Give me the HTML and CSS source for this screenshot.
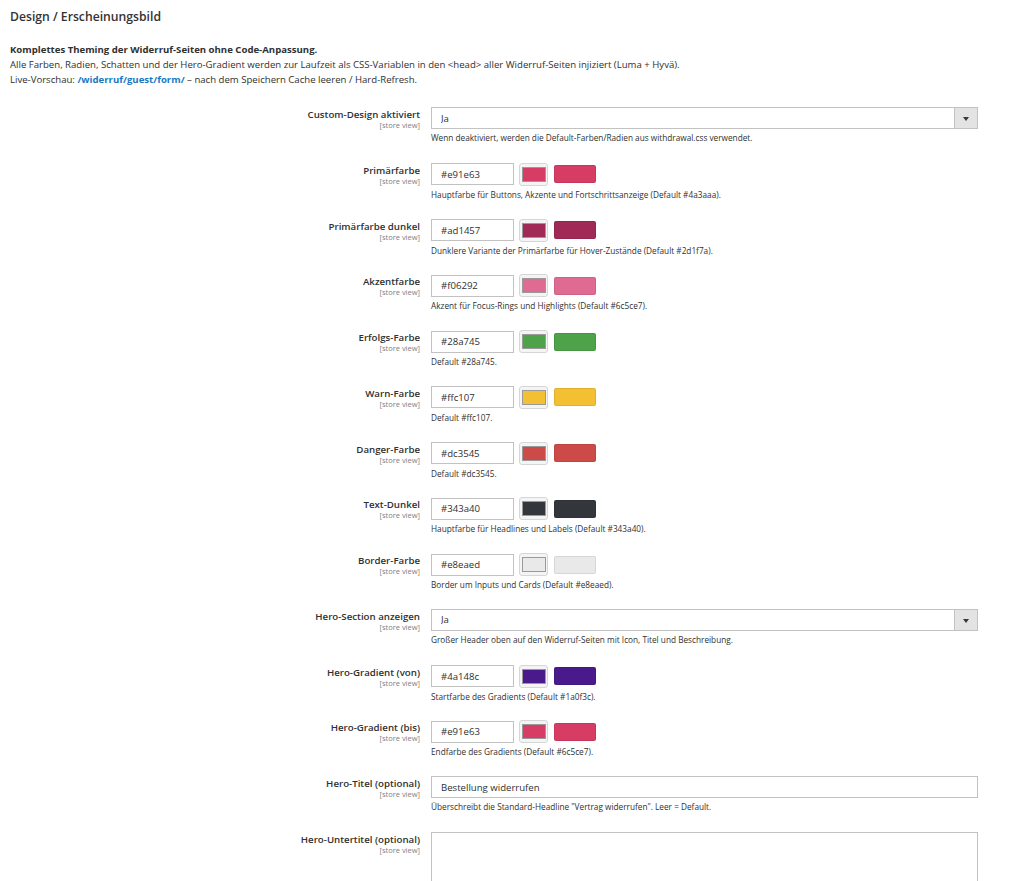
FILE: index.html
```html
<!DOCTYPE html>
<html lang="de">

<head>
    <meta charset="UTF-8">
    <meta name="viewport" content="width=device-width, initial-scale=1.0">
    <title>Design / Erscheinungsbild</title>
    <link rel="stylesheet" href="styles.css">
</head>

<body>
    <div class="section-wrap">
        <h2 class="section-title">Design / Erscheinungsbild</h2>

        <div class="section-comment">
            <strong>Komplettes Theming der Widerruf-Seiten ohne Code-Anpassung.</strong><br>
            Alle Farben, Radien, Schatten und der Hero-Gradient werden zur Laufzeit als CSS-Variablen in den &lt;head&gt; aller Widerruf-Seiten injiziert (Luma + Hyvä).<br>
            Live-Vorschau: <a class="comment-link" href="#">/widerruf/guest/form/</a> – nach dem Speichern Cache leeren / Hard-Refresh.
        </div>

        <section class="form-list">
            <div class="field">
                <label class="field-label">
                    <span class="label-text">Custom-Design aktiviert</span>
                    <span class="scope">[store view]</span>
                </label>
                <div class="field-control">
                    <div class="select-wrap">
                        <select class="select">
                            <option>Ja</option>
                            <option>Nein</option>
                        </select>
                        <span class="select-arrow"></span>
                    </div>
                    <p class="note">Wenn deaktiviert, werden die Default-Farben/Radien aus withdrawal.css verwendet.</p>
                </div>
            </div>

            <div class="field">
                <label class="field-label">
                    <span class="label-text">Primärfarbe</span>
                    <span class="scope">[store view]</span>
                </label>
                <div class="field-control">
                    <div class="color-row">
                        <input type="text" class="input-text color-input" value="#e91e63">
                        <span class="swatch-btn"><span class="swatch" style="--c: #d73c64;"></span></span>
                        <span class="preview" style="--c: #d73c64;"></span>
                    </div>
                    <p class="note">Hauptfarbe für Buttons, Akzente und Fortschrittsanzeige (Default #4a3aaa).</p>
                </div>
            </div>

            <div class="field">
                <label class="field-label">
                    <span class="label-text">Primärfarbe dunkel</span>
                    <span class="scope">[store view]</span>
                </label>
                <div class="field-control">
                    <div class="color-row">
                        <input type="text" class="input-text color-input" value="#ad1457">
                        <span class="swatch-btn"><span class="swatch" style="--c: #a02a55;"></span></span>
                        <span class="preview" style="--c: #a02a55;"></span>
                    </div>
                    <p class="note">Dunklere Variante der Primärfarbe für Hover-Zustände (Default #2d1f7a).</p>
                </div>
            </div>

            <div class="field">
                <label class="field-label">
                    <span class="label-text">Akzentfarbe</span>
                    <span class="scope">[store view]</span>
                </label>
                <div class="field-control">
                    <div class="color-row">
                        <input type="text" class="input-text color-input" value="#f06292">
                        <span class="swatch-btn"><span class="swatch" style="--c: #e06b92;"></span></span>
                        <span class="preview" style="--c: #e06b92;"></span>
                    </div>
                    <p class="note">Akzent für Focus-Rings und Highlights (Default #6c5ce7).</p>
                </div>
            </div>

            <div class="field">
                <label class="field-label">
                    <span class="label-text">Erfolgs-Farbe</span>
                    <span class="scope">[store view]</span>
                </label>
                <div class="field-control">
                    <div class="color-row">
                        <input type="text" class="input-text color-input" value="#28a745">
                        <span class="swatch-btn"><span class="swatch" style="--c: #4ea24a;"></span></span>
                        <span class="preview" style="--c: #4ea24a;"></span>
                    </div>
                    <p class="note">Default #28a745.</p>
                </div>
            </div>

            <div class="field">
                <label class="field-label">
                    <span class="label-text">Warn-Farbe</span>
                    <span class="scope">[store view]</span>
                </label>
                <div class="field-control">
                    <div class="color-row">
                        <input type="text" class="input-text color-input" value="#ffc107">
                        <span class="swatch-btn"><span class="swatch" style="--c: #f3c033;"></span></span>
                        <span class="preview" style="--c: #f3c033;"></span>
                    </div>
                    <p class="note">Default #ffc107.</p>
                </div>
            </div>

            <div class="field">
                <label class="field-label">
                    <span class="label-text">Danger-Farbe</span>
                    <span class="scope">[store view]</span>
                </label>
                <div class="field-control">
                    <div class="color-row">
                        <input type="text" class="input-text color-input" value="#dc3545">
                        <span class="swatch-btn"><span class="swatch" style="--c: #cc4a47;"></span></span>
                        <span class="preview" style="--c: #cc4a47;"></span>
                    </div>
                    <p class="note">Default #dc3545.</p>
                </div>
            </div>

            <div class="field">
                <label class="field-label">
                    <span class="label-text">Text-Dunkel</span>
                    <span class="scope">[store view]</span>
                </label>
                <div class="field-control">
                    <div class="color-row">
                        <input type="text" class="input-text color-input" value="#343a40">
                        <span class="swatch-btn"><span class="swatch" style="--c: #33373c;"></span></span>
                        <span class="preview" style="--c: #33373c;"></span>
                    </div>
                    <p class="note">Hauptfarbe für Headlines und Labels (Default #343a40).</p>
                </div>
            </div>

            <div class="field">
                <label class="field-label">
                    <span class="label-text">Border-Farbe</span>
                    <span class="scope">[store view]</span>
                </label>
                <div class="field-control">
                    <div class="color-row">
                        <input type="text" class="input-text color-input" value="#e8eaed">
                        <span class="swatch-btn"><span class="swatch" style="--c: #e9e9e9;"></span></span>
                        <span class="preview" style="--c: #e9e9e9;"></span>
                    </div>
                    <p class="note">Border um Inputs und Cards (Default #e8eaed).</p>
                </div>
            </div>

            <div class="field">
                <label class="field-label">
                    <span class="label-text">Hero-Section anzeigen</span>
                    <span class="scope">[store view]</span>
                </label>
                <div class="field-control">
                    <div class="select-wrap">
                        <select class="select">
                            <option>Ja</option>
                            <option>Nein</option>
                        </select>
                        <span class="select-arrow"></span>
                    </div>
                    <p class="note">Großer Header oben auf den Widerruf-Seiten mit Icon, Titel und Beschreibung.</p>
                </div>
            </div>

            <div class="field">
                <label class="field-label">
                    <span class="label-text">Hero-Gradient (von)</span>
                    <span class="scope">[store view]</span>
                </label>
                <div class="field-control">
                    <div class="color-row">
                        <input type="text" class="input-text color-input" value="#4a148c">
                        <span class="swatch-btn"><span class="swatch" style="--c: #4a1a8c;"></span></span>
                        <span class="preview" style="--c: #4a1a8c;"></span>
                    </div>
                    <p class="note">Startfarbe des Gradients (Default #1a0f3c).</p>
                </div>
            </div>

            <div class="field">
                <label class="field-label">
                    <span class="label-text">Hero-Gradient (bis)</span>
                    <span class="scope">[store view]</span>
                </label>
                <div class="field-control">
                    <div class="color-row">
                        <input type="text" class="input-text color-input" value="#e91e63">
                        <span class="swatch-btn"><span class="swatch" style="--c: #d73c64;"></span></span>
                        <span class="preview" style="--c: #d73c64;"></span>
                    </div>
                    <p class="note">Endfarbe des Gradients (Default #6c5ce7).</p>
                </div>
            </div>

            <div class="field">
                <label class="field-label">
                    <span class="label-text">Hero-Titel (optional)</span>
                    <span class="scope">[store view]</span>
                </label>
                <div class="field-control">
                    <input type="text" class="input-text" value="Bestellung widerrufen">
                    <p class="note">Überschreibt die Standard-Headline "Vertrag widerrufen". Leer = Default.</p>
                </div>
            </div>

            <div class="field">
                <label class="field-label">
                    <span class="label-text">Hero-Untertitel (optional)</span>
                    <span class="scope">[store view]</span>
                </label>
                <div class="field-control">
                    <textarea class="textarea"></textarea>
                </div>
            </div>
        </section>
    </div>
</body>

</html>
```

FILE: styles.css
```css
html,
body {
    margin: 0;
    padding: 0;
    background: #fff;
}

body {
    font-family: "Open Sans", "Noto Sans", sans-serif;
    color: #303030;
}

.section-wrap {
    padding: 7px 10px 0;
}

.section-title {
    margin: 0;

    font-size: 12.2px;
    font-weight: 600;
    line-height: 20px;
    color: #333;
}

.section-comment {
    margin-top: 15px;

    font-size: 9.6px;
    line-height: 15px;
    color: #303030;
}

.section-comment strong {
    font-weight: 700;
}

.comment-link {
    color: #1979c3;
    font-weight: 700;
    text-decoration: none;
}

.form-list {
    margin-top: 20px;
}

.field {
    display: grid;
    grid-template-columns: 410px 547px;
    column-gap: 11px;

    height: 55.77px;
}

.field-label {
    display: flex;
    flex-direction: column;
    align-items: flex-end;

    padding-top: 2px;
    text-align: right;
}

.label-text {
    font-size: 9.7px;
    font-weight: 600;
    line-height: 12px;
    color: #303030;
}

.scope {
    font-size: 7.5px;
    line-height: 9px;
    color: #808080;
}

.field-control {
    display: flex;
    flex-direction: column;
}

.input-text,
.select-wrap,
.textarea {
    box-sizing: border-box;
    width: 100%;
    height: 22px;

    border: 1px solid #c2c2c2;
    background: #fff;

    font-family: inherit;
    font-size: 9.6px;
    color: #303030;
}

.input-text {
    padding: 0 9px;
    margin: 0;
}

.color-row {
    display: flex;
    align-items: center;
}

.color-input {
    width: 83px;
}

.swatch-btn {
    box-sizing: border-box;
    display: flex;
    align-items: center;
    justify-content: center;

    width: 29px;
    height: 23px;
    margin-left: 5px;

    border: 1px solid #d6d6d6;
    border-radius: 3px;
    background: #f4f4f4;
}

.swatch {
    box-sizing: border-box;
    width: 24px;
    height: 15px;

    border: 1px solid #9a9a9a;
    background: var(--c);
}

.preview {
    box-sizing: border-box;
    width: 42px;
    height: 18px;
    margin-left: 6px;

    border: 1px solid rgba(0, 0, 0, 0.08);
    border-radius: 2px;
    background: var(--c);
}

.select-wrap {
    display: flex;
}

.select {
    flex: 1;
    appearance: none;
    -webkit-appearance: none;

    padding: 0 9px;
    border: 0;
    background: transparent;
    outline: none;

    font-family: inherit;
    font-size: 9.6px;
    color: #303030;
}

.select-arrow {
    position: relative;
    width: 22px;

    border-left: 1px solid #c2c2c2;
    background: #e3e3e3;
}

.select-arrow::after {
    content: "";
    position: absolute;
    left: 8px;
    top: 9px;

    border-left: 3px solid transparent;
    border-right: 3px solid transparent;
    border-top: 4px solid #41362f;
}

.note {
    margin: 3px 0 0;

    font-size: 8.25px;
    line-height: 12px;
    color: #303030;
}

.textarea {
    height: 90px;
    padding: 5px 9px;
    resize: none;
}
```
